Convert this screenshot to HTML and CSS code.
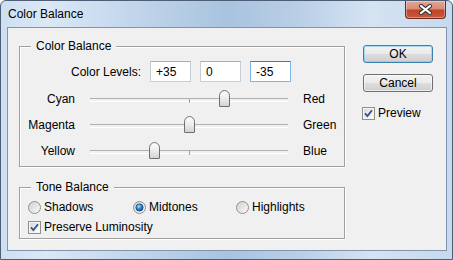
FILE: index.html
```html
<html>
<head>
  <meta charset="UTF-8">
  <title>Color Balance</title>
  <link rel="stylesheet" href="styles.css">
</head>
<body>
  <svg class="defs" width="0" height="0" aria-hidden="true">
    <defs>
      <linearGradient id="boxBg" x1="0" y1="0" x2="1" y2="1">
        <stop offset="0" stop-color="#d8d8d8"/>
        <stop offset="1" stop-color="#ffffff"/>
      </linearGradient>
      <linearGradient id="radioBg" x1="0" y1="0" x2="1" y2="1">
        <stop offset="0" stop-color="#cfcfcf"/>
        <stop offset="1" stop-color="#fbfbfb"/>
      </linearGradient>
      <radialGradient id="radioDot" cx="0.4" cy="0.35" r="0.7">
        <stop offset="0" stop-color="#9fe3ff"/>
        <stop offset="0.5" stop-color="#2b8ad6"/>
        <stop offset="1" stop-color="#0d3f86"/>
      </radialGradient>
      <linearGradient id="thumbBg" x1="0" y1="0" x2="0" y2="1">
        <stop offset="0" stop-color="#ffffff"/>
        <stop offset="0.5" stop-color="#ececec"/>
        <stop offset="1" stop-color="#d2d2d2"/>
      </linearGradient>
    </defs>
  </svg>

  <div class="window">
    <div class="titlebar">
      <span class="title">Color Balance</span>
      <button class="close" type="button">
        <svg width="15" height="11" viewBox="0 0 15 11">
          <path d="M3 2L12 9M12 2L3 9" stroke="#3a3a3a" stroke-width="4.2" stroke-linecap="round"/>
          <path d="M3 2L12 9M12 2L3 9" stroke="#ffffff" stroke-width="2.2" stroke-linecap="round"/>
        </svg>
      </button>
    </div>

    <div class="client">
      <div class="main">
        <div class="group balance">
          <span class="group-title">Color Balance</span>
          <div class="levels">
            <label class="levels-label">Color Levels:</label>
            <input class="field" type="text" value="+35">
            <input class="field" type="text" value="0">
            <input class="field active" type="text" value="-35">
          </div>
          <div class="sliders">
            <span class="slider-label">Cyan</span>
            <div class="slider">
              <svg class="thumb" style="left: 67.5%" width="11" height="17" viewBox="0 0 11 17">
                <path d="M.5 16V5.5C.5 3 3 .5 5.5 .5S10.5 3 10.5 5.5V16Q10.5 16.5 10 16.5H1Q.5 16.5 .5 16Z" fill="url(#thumbBg)" stroke="#6f6f6f"/>
              </svg>
            </div>
            <span>Red</span>

            <span class="slider-label">Magenta</span>
            <div class="slider">
              <svg class="thumb" style="left: 50%" width="11" height="17" viewBox="0 0 11 17">
                <path d="M.5 16V5.5C.5 3 3 .5 5.5 .5S10.5 3 10.5 5.5V16Q10.5 16.5 10 16.5H1Q.5 16.5 .5 16Z" fill="url(#thumbBg)" stroke="#6f6f6f"/>
              </svg>
            </div>
            <span>Green</span>

            <span class="slider-label">Yellow</span>
            <div class="slider">
              <svg class="thumb" style="left: 32.5%" width="11" height="17" viewBox="0 0 11 17">
                <path d="M.5 16V5.5C.5 3 3 .5 5.5 .5S10.5 3 10.5 5.5V16Q10.5 16.5 10 16.5H1Q.5 16.5 .5 16Z" fill="url(#thumbBg)" stroke="#6f6f6f"/>
              </svg>
            </div>
            <span>Blue</span>
          </div>
        </div>

        <div class="group tone">
          <span class="group-title">Tone Balance</span>
          <div class="radios">
            <label class="option">
              <svg width="13" height="13" viewBox="0 0 13 13">
                <circle cx="6.5" cy="6.5" r="6" fill="url(#radioBg)" stroke="#8e8f8f"/>
              </svg>
              Shadows
            </label>
            <label class="option">
              <svg width="13" height="13" viewBox="0 0 13 13">
                <circle cx="6.5" cy="6.5" r="6" fill="url(#radioBg)" stroke="#8e8f8f"/>
                <circle cx="6.5" cy="6.5" r="3.6" fill="url(#radioDot)" stroke="#16457f" stroke-width=".8"/>
              </svg>
              Midtones
            </label>
            <label class="option">
              <svg width="13" height="13" viewBox="0 0 13 13">
                <circle cx="6.5" cy="6.5" r="6" fill="url(#radioBg)" stroke="#8e8f8f"/>
              </svg>
              Highlights
            </label>
          </div>
          <label class="check">
            <svg width="13" height="13" viewBox="0 0 13 13">
              <rect x=".5" y=".5" width="12" height="12" fill="#f6f6f6" stroke="#8f8f8f"/>
              <rect x="2" y="2" width="9" height="9" fill="url(#boxBg)"/>
              <path d="M3 6.3L5.4 9L10 3.2" fill="none" stroke="#33518f" stroke-width="1.8"/>
            </svg>
            Preserve Luminosity
          </label>
        </div>
      </div>

      <div class="side">
        <button class="btn default" type="button">OK</button>
        <button class="btn" type="button">Cancel</button>
        <label class="check preview">
          <svg width="13" height="13" viewBox="0 0 13 13">
            <rect x=".5" y=".5" width="12" height="12" fill="#f6f6f6" stroke="#8f8f8f"/>
            <rect x="2" y="2" width="9" height="9" fill="url(#boxBg)"/>
            <path d="M3 6.3L5.4 9L10 3.2" fill="none" stroke="#33518f" stroke-width="1.8"/>
          </svg>
          Preview
        </label>
      </div>
    </div>
  </div>
</body>
</html>
```

FILE: styles.css
```css
* {
  box-sizing: border-box;
}

body {
  margin: 0;
  background: #ffffff;
  font: 12px "Liberation Sans", Arial, sans-serif;
  color: #000;
}

.defs {
  position: absolute;
  width: 0;
  height: 0;
}

.window {
  width: 453px;
  height: 260px;
  display: flex;
  flex-direction: column;
  padding: 0 5px 8px 6px;
  border: 1px solid #4e5e74;
  border-radius: 6px 6px 0 0;
  background: linear-gradient(to right, #cddff1 0%, #dbe8f5 10%, #c3d7ec 28%, #a9c3df 50%, #b9cfe6 66%, #d5e3f2 82%, #c6d9ed 100%);
}

.titlebar {
  height: 26px;
  display: flex;
  justify-content: space-between;
  align-items: flex-start;
}

.title {
  padding-left: 1px;
  line-height: 26px;
}

.close {
  width: 41px;
  height: 18px;
  margin-right: 1px;
  padding: 0;
  display: flex;
  align-items: center;
  justify-content: center;
  border: 1px solid #6b2a1e;
  border-top: none;
  border-radius: 0 0 4px 4px;
  background: linear-gradient(#e4a697 0%, #d88c78 45%, #c0442a 55%, #c9593c 100%);
  box-shadow: inset 0 0 0 1px rgba(255, 255, 255, 0.35);
}

.client {
  flex: 1;
  display: flex;
  padding: 11px 0 0 11px;
  border: 1px solid #8094ad;
  background: #f0f0f0;
}

.main {
  width: 326px;
}

/* group boxes */
.group {
  border: 1px solid #a0a0a0;
  box-shadow: inset 1px 1px 0 #fff, 1px 1px 0 #fff;
}

.group-title {
  display: table;
  margin: -8px 0 0 11px;
  padding: 0 5px;
  line-height: 14px;
  background: #f0f0f0;
}

.balance {
  height: 121px;
  margin-top: 7px;
}

.tone {
  height: 52px;
  margin-top: 20px;
}

.levels {
  display: flex;
  align-items: center;
  gap: 9px;
  margin-top: 8px;
}

.levels-label {
  width: 121px;
  text-align: right;
}

.field {
  width: 41px;
  height: 21px;
  padding: 0 5px;
  border: 1px solid #c9ccd1;
  border-top-color: #abadb3;
  background: #fff;
  font: inherit;
  color: #000;
}

.field.active {
  border-color: #7eb4ea;
  border-top-color: #3d7bad;
}

.sliders {
  display: grid;
  grid-template-columns: 55px 198px auto;
  grid-auto-rows: 26px;
  column-gap: 15px;
  align-items: center;
  margin-top: 4px;
}

.slider-label {
  text-align: right;
}

.slider {
  position: relative;
  height: 26px;
}

.slider::before {
  content: "";
  position: absolute;
  left: 0;
  right: 0;
  top: 12px;
  height: 2px;
  border-top: 1px solid #b1b1b1;
  border-bottom: 1px solid #fff;
}

.slider::after {
  content: "";
  position: absolute;
  left: 99px;
  top: 13px;
  width: 1px;
  height: 4px;
  background: #a0a0a0;
}

.thumb {
  position: absolute;
  top: 4px;
  margin-left: -5px;
  z-index: 1;
}

.radios {
  display: grid;
  grid-template-columns: 105px 103px auto;
  height: 20px;
  align-items: center;
  margin-top: 3px;
  padding-left: 8px;
}

.option,
.check {
  display: flex;
  align-items: center;
  gap: 3px;
}

.check {
  height: 20px;
  padding-left: 8px;
}

/* buttons column */
.side {
  margin-left: 18px;
  padding-top: 6px;
}

.btn {
  display: block;
  width: 70px;
  height: 18px;
  padding: 0;
  border: 1px solid #707070;
  border-radius: 3px;
  background: linear-gradient(#f2f2f2 0%, #ebebeb 48%, #dddddd 52%, #cfcfcf 100%);
  box-shadow: inset 0 0 0 1px rgba(255, 255, 255, 0.6);
  font: inherit;
  line-height: 16px;
  color: #000;
}

.btn + .btn {
  margin-top: 11px;
}

.btn.default {
  border-color: #3c7fb1;
  box-shadow: inset 0 0 0 1px rgba(120, 200, 245, 0.6);
}

.check.preview {
  margin: 11px 0 0 -1px;
  padding-left: 0;
}
```
